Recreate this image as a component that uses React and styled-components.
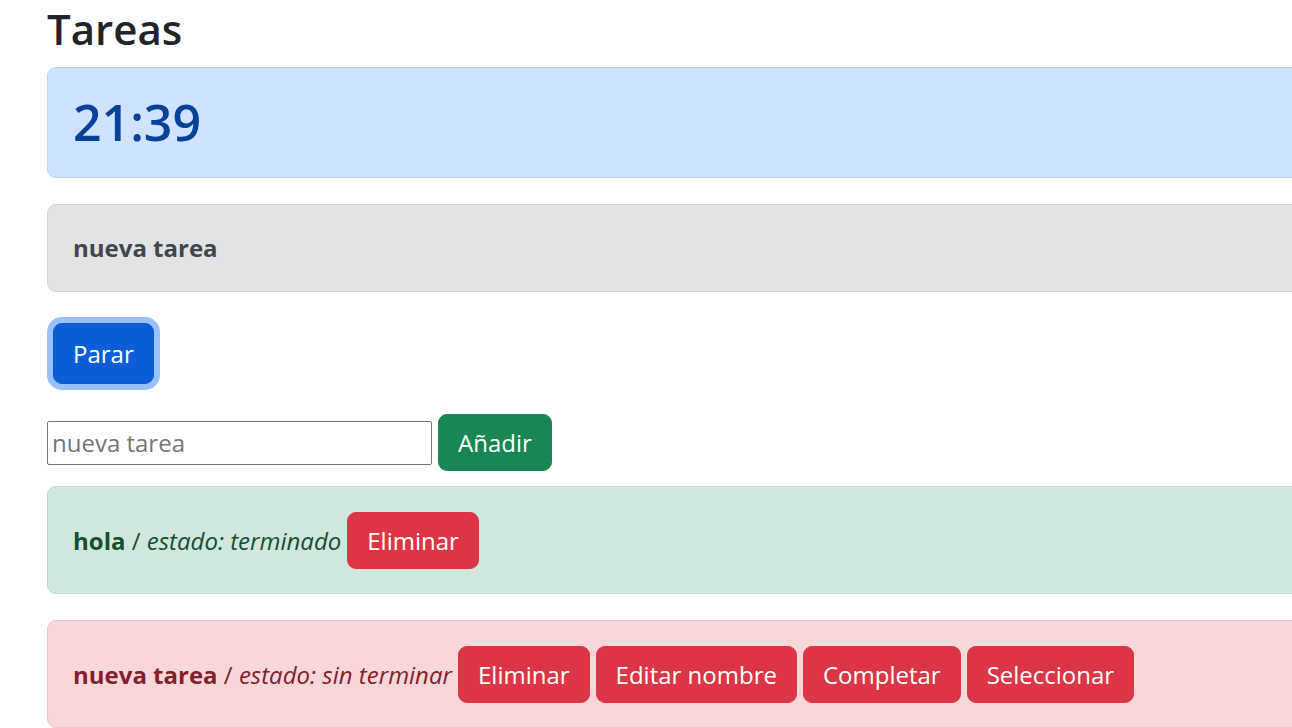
import React, { useState } from "react"
import styled, { createGlobalStyle } from "styled-components"

const GlobalStyle = createGlobalStyle`
	body {
		margin: 0;
		overflow: hidden;
		background: #fff;
		color: #212529;
		font-family: "Open Sans", "Noto Sans", sans-serif;
		font-size: 24px;
	}
`

const tones = {
	primary: { bg: "#cfe2ff", border: "#b6d4fe", text: "#084298" },
	secondary: { bg: "#e2e3e5", border: "#d3d6d8", text: "#41464b" },
	success: { bg: "#d1e7dd", border: "#badbcc", text: "#0f5132" },
	danger: { bg: "#f8d7da", border: "#f5c2c7", text: "#842029" }
}

const buttons = {
	primary: { bg: "#0b5ed7", border: "#0a58ca" },
	success: { bg: "#198754", border: "#198754" },
	danger: { bg: "#dc3545", border: "#dc3545" }
}

const Container = styled.div`
	width: 1320px;
	margin-left: 47px;
`

const Title = styled.h2`
	margin: 0 0 10px;
	font-size: 42px;
	line-height: 57px;
	font-weight: 600;
	color: #212529;
`

const Alert = styled.div`
	padding: 24px 25px;
	margin-bottom: 26px;
	border: 1px solid ${p => tones[p.$tone].border};
	border-radius: 9px;
	background: ${p => tones[p.$tone].bg};
	color: ${p => tones[p.$tone].text};
`

const Clock = styled.div`
	font-size: 50px;
	line-height: 61px;
	font-weight: 600;
`

const Current = styled.b`
	display: block;
	line-height: 38px;
`

const Button = styled.button`
	padding: ${p => (p.$large ? "11px 19px" : "9px 19px")};
	border: 1px solid ${p => buttons[p.$variant].border};
	border-radius: 9px;
	background: ${p => buttons[p.$variant].bg};
	color: #fff;
	font: inherit;
	line-height: 37px;
	white-space: nowrap;
	cursor: pointer;
	box-shadow: ${p => (p.$focused ? "0 0 0 6px rgba(49, 132, 253, 0.5)" : "none")};
`

const StopRow = styled.div`
	padding: 5px 6px 0;
	margin-bottom: 30px;
`

const AddRow = styled.form`
	display: flex;
	align-items: center;
	gap: 6px;
	margin-bottom: 15px;
`

const TaskInput = styled.input`
	box-sizing: border-box;
	width: 385px;
	height: 44px;
	padding: 0 4px;
	border: 1px solid #767676;
	border-radius: 2px;
	font: inherit;
	color: #212529;

	&::placeholder {
		color: #757575;
	}
`

const TaskRow = styled.div`
	display: flex;
	align-items: center;
	gap: 6px;
	min-height: 58px;
	white-space: nowrap;
`

const State = styled.i`
	font-style: italic;
`

const initial = [
	{ name: "hola", done: true },
	{ name: "nueva tarea", done: false }
]

export default function App() {
	const [tasks, setTasks] = useState(initial)
	const [draft, setDraft] = useState("")

	const add_task = e => {
		e.preventDefault()
		if (!draft) return
		setTasks([...tasks, { name: draft, done: false }])
		setDraft("")
	}

	const remove = idx => setTasks(tasks.filter((_, i) => i != idx))
	const complete = idx =>
		setTasks(tasks.map((t, i) => (i == idx ? { ...t, done: true } : t)))

	return (
		<Container>
			<GlobalStyle />
			<Title>Tareas</Title>

			<Alert $tone="primary">
				<Clock>21:39</Clock>
			</Alert>

			<Alert $tone="secondary">
				<Current>nueva tarea</Current>
			</Alert>

			<StopRow>
				<Button $variant="primary" $large $focused>
					Parar
				</Button>
			</StopRow>

			<AddRow onSubmit={add_task}>
				<TaskInput
					placeholder="nueva tarea"
					value={draft}
					onChange={e => setDraft(e.target.value)}
				/>
				<Button $variant="success" type="submit">
					Añadir
				</Button>
			</AddRow>

			{tasks.map((task, idx) => (
				<Alert key={idx} $tone={task.done ? "success" : "danger"}>
					<TaskRow>
						<span>
							<b>{task.name}</b> / <State>estado: {task.done ? "terminado" : "sin terminar"}</State>
						</span>
						<Button $variant="danger" onClick={() => remove(idx)}>
							Eliminar
						</Button>
						{!task.done && (
							<>
								<Button $variant="danger">Editar nombre</Button>
								<Button $variant="danger" onClick={() => complete(idx)}>
									Completar
								</Button>
								<Button $variant="danger">Seleccionar</Button>
							</>
						)}
					</TaskRow>
				</Alert>
			))}
		</Container>
	)
}
